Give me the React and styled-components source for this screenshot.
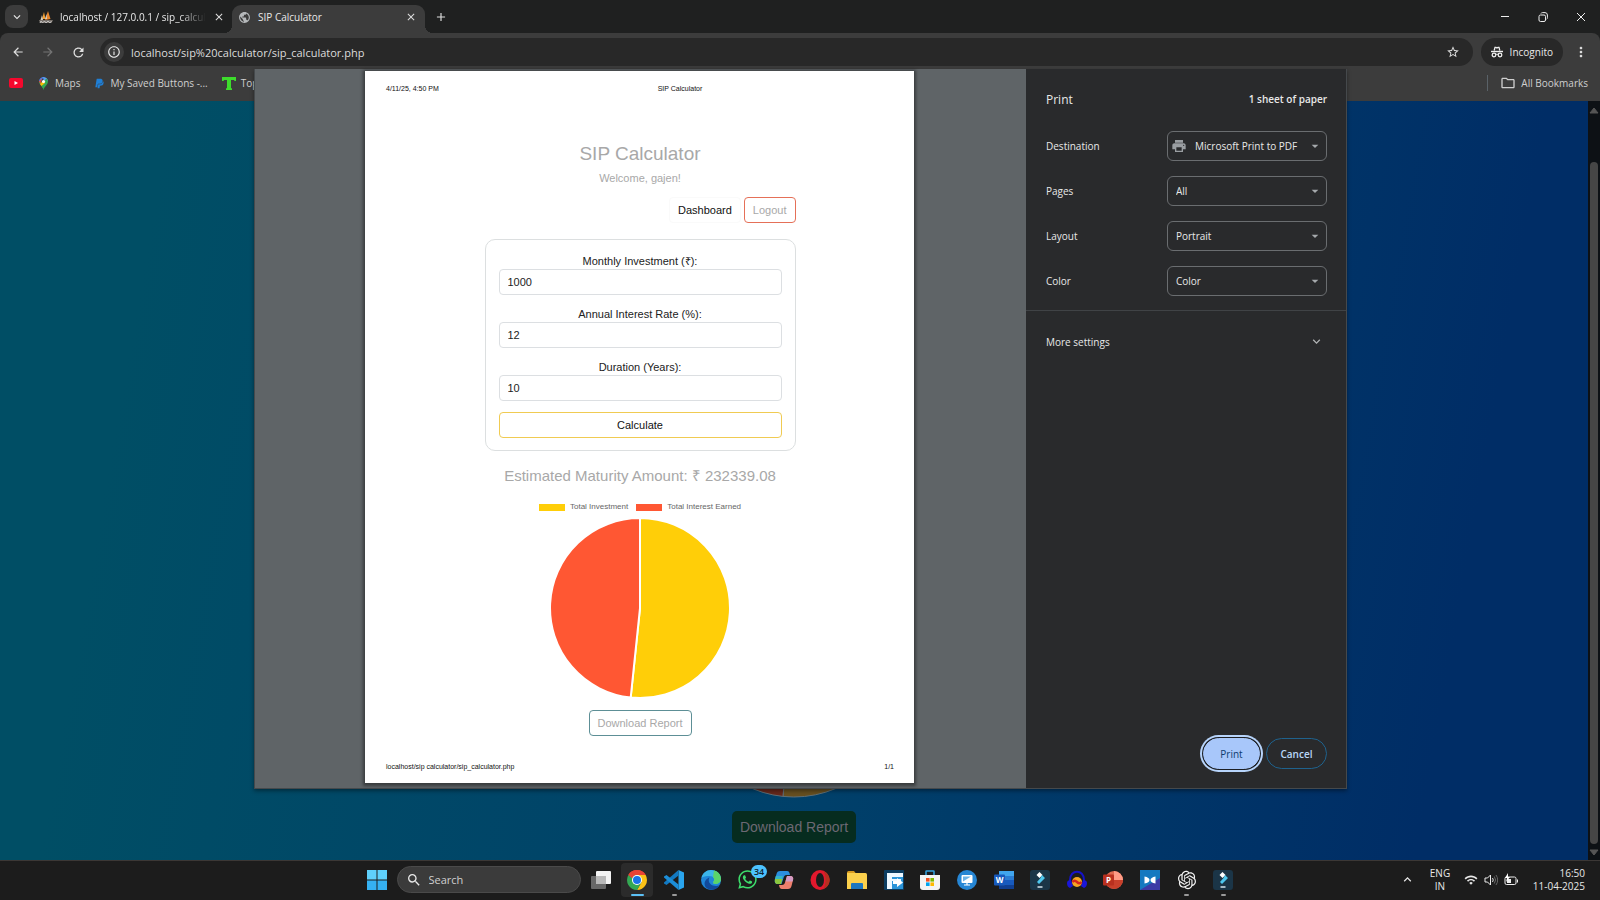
import { useState } from 'react';
import styled, { createGlobalStyle, css } from 'styled-components';
import {
	MdAdd,
	MdArrowBack,
	MdArrowDropDown,
	MdArrowForward,
	MdClose,
	MdExpandLess,
	MdExpandMore,
	MdInfoOutline,
	MdMoreVert,
	MdOutlineFolder,
	MdPrint,
	MdPublic,
	MdRefresh,
	MdSearch,
	MdStarBorder,
	MdWifi,
} from 'react-icons/md';
import { FaPaypal, FaWhatsapp } from 'react-icons/fa';
import { RiOpenaiFill } from 'react-icons/ri';

const GlobalStyle = createGlobalStyle`
	* {
		box-sizing: border-box;
	}
	body {
		margin: 0;
		font-family: 'Open Sans', 'Noto Sans', sans-serif;
		font-size: 10px;
		color: #e8e8e8;
		background: #1c1c1c;
	}
	button, input, select {
		font: inherit;
		color: inherit;
		margin: 0;
	}
	button {
		padding: 0;
		border: 0;
		background: none;
	}
	svg {
		display: block;
		flex: none;
	}
	p, h1, h2 {
		margin: 0;
		font-weight: 400;
	}
`;

const Desktop = styled.div`
	position: relative;
	display: flex;
	flex-direction: column;
	min-height: 100vh;
	overflow: hidden;
`;

/* ---------- browser frame ---------- */

const TabStrip = styled.header`
	display: flex;
	align-items: center;
	height: 33px;
	padding-left: 5px;
	background: #1f2020;
`;

const TabSearch = styled.button`
	display: grid;
	place-items: center;
	width: 23px;
	height: 23px;
	border-radius: 8px;
	background: #3c3c3c;
`;

const Tab = styled.div`
	position: relative;
	display: flex;
	align-items: center;
	gap: 7px;
	width: ${(props) => (props.$active ? '193px' : '200px')};
	height: 28px;
	align-self: flex-end;
	padding: 0 7px 4px ${(props) => (props.$active ? '6px' : '11px')};
	border-radius: 9px 9px 0 0;
	${(props) =>
		props.$active &&
		css`
			background: #3c3c3c;
			margin-left: 4px;
			&::before,
			&::after {
				content: '';
				position: absolute;
				bottom: 0;
				width: 8px;
				height: 8px;
			}
			&::before {
				left: -8px;
				background: radial-gradient(circle at 0 0, transparent 8px, #3c3c3c 8px);
			}
			&::after {
				right: -8px;
				background: radial-gradient(circle at 100% 0, transparent 8px, #3c3c3c 8px);
			}
		`}
`;

const TabTitle = styled.span`
	flex: 1;
	white-space: nowrap;
	line-height: 16px;
	${(props) =>
		props.$fade &&
		css`
			mask-image: linear-gradient(90deg, #000 82%, transparent);
		`}
`;

const IconButton = styled.button`
	display: grid;
	place-items: center;
	width: ${(props) => props.$size || 14}px;
	height: ${(props) => props.$size || 14}px;
	color: ${(props) => props.$color || '#dedede'};
`;

const NewTab = styled(IconButton)`
	margin-left: 9px;
`;

const WindowControls = styled.div`
	display: flex;
	gap: 14px;
	margin-left: auto;
	padding-right: 7px;
`;

const Toolbar = styled.nav`
	display: flex;
	align-items: center;
	height: 36px;
	padding: 2px 9px 0 6px;
	background: #3c3c3c;
	border-radius: 8px 8px 0 0;
`;

const ToolbarBack = styled.div`
	background: #1f2020;
`;

const NavButtons = styled.div`
	display: flex;
	gap: 6px;
	width: 94px;
`;

const Omnibox = styled.div`
	display: flex;
	align-items: center;
	flex: 1;
	height: 28px;
	padding: 0 10px 0 4px;
	border-radius: 14px;
	background: #282828;
`;

const SiteInfo = styled.button`
	display: grid;
	place-items: center;
	width: 20px;
	height: 20px;
	border-radius: 10px;
	background: #3c3c3c;
`;

const Url = styled.input`
	flex: 1;
	margin-left: 7px;
	padding: 0;
	border: 0;
	outline: 0;
	background: none;
	font-size: 11px;
	color: #dcdcdc;
`;

const Incognito = styled.button`
	display: flex;
	align-items: center;
	gap: 7px;
	height: 28px;
	margin: 0 8px;
	padding: 0 10px;
	border-radius: 14px;
	background: #282828;
`;

const BookmarkBar = styled.nav`
	display: flex;
	align-items: center;
	height: 32px;
	padding: 0 12px 4px 9px;
	background: #3c3c3c;
`;

const Bookmark = styled.a`
	display: flex;
	align-items: center;
	gap: 5px;
	margin-right: 14px;
	color: #cfcfcf;
	text-decoration: none;
	white-space: nowrap;
`;

const AllBookmarks = styled(Bookmark)`
	margin: 0 0 0 auto;
	padding-left: 12px;
	border-left: 1px solid #5a6268;
`;

/* ---------- web page behind the dialog ---------- */

const Viewport = styled.main`
	display: flex;
	flex: 1;
	min-height: 0;
	overflow: hidden;
`;

const SipPage = styled.section`
	display: flex;
	flex: 1;
	flex-direction: column;
	justify-content: flex-end;
	align-items: center;
	gap: 13px;
	padding-bottom: 17px;
	background: linear-gradient(100deg, #004e65 10%, #00406a 55%, #002d66 90%);
`;

const DimButton = styled.button`
	width: 124px;
	height: 32px;
	border-radius: 5px;
	background: #062c1f;
	color: #6c6873;
	font-family: 'Liberation Sans', Arial, sans-serif;
	font-size: 14px;
`;

const Scrollbar = styled.div`
	display: flex;
	flex-direction: column;
	align-items: center;
	width: 12px;
	background: #0d1115;
	color: #555;
`;

const ScrollThumb = styled.div`
	flex: 1;
	width: 8px;
	margin-top: 45px;
	border-radius: 4px;
	background: #464646;
`;

/* ---------- print dialog ---------- */

const PrintDialog = styled.section`
	position: absolute;
	inset: 69px 253px 111px 254px;
	display: flex;
	border: 1px solid #45494c;
	border-top: 0;
	box-shadow: 0 2px 4px rgba(0, 0, 0, 0.4);
`;

const Preview = styled.div`
	display: flex;
	flex: 1;
	justify-content: center;
	padding: 2px 2px 5px 0;
	background: #5f6467;
`;

const Sheet = styled.article`
	display: flex;
	flex-direction: column;
	align-items: center;
	height: 100%;
	aspect-ratio: 549 / 712;
	padding: 13px 20px 11px 21px;
	background: #fff;
	box-shadow: 0 1px 3px 2px rgba(0, 0, 0, 0.4);
	color: #222;
	font-family: 'Liberation Sans', Arial, sans-serif;
	font-size: 11px;
`;

const SheetLine = styled.div`
	display: grid;
	grid-template-columns: 1fr auto 1fr;
	width: 100%;
	padding-left: ${(props) => (props.$header ? '80px' : '0')};
	font-size: 7px;
	line-height: 10px;
	color: #111;

	& > :first-child {
		margin-left: ${(props) => (props.$header ? '-80px' : '0')};
	}
	& > :last-child {
		text-align: right;
	}
`;

const Report = styled.div`
	display: flex;
	flex: 1;
	flex-direction: column;
	align-items: center;
	width: 311px;
	padding-top: 47px;
`;

const Title = styled.h1`
	font-size: 19px;
	line-height: 26px;
	color: #a8a8a8;
`;

const Welcome = styled.p`
	margin-top: 3px;
	line-height: 16px;
	color: #a8a8a8;
`;

const Links = styled.div`
	display: flex;
	align-self: flex-end;
	gap: 3px;
	margin: 11px 0 16px;
`;

const OutlineButton = styled.button`
	height: 26px;
	padding: 0 8px;
	border: 1px solid ${(props) => props.$border};
	border-radius: 4px;
	color: ${(props) => props.$color || '#a8a8a8'};
	text-align: center;
`;

const Card = styled.form`
	display: flex;
	flex-direction: column;
	width: 100%;
	padding: 13px 13px 12px;
	border: 1px solid #dcdfe0;
	border-radius: 10px;
`;

const Field = styled.label`
	display: block;
	margin-bottom: 11px;
	line-height: 16px;
	text-align: center;
`;

const FieldInput = styled.input`
	display: block;
	width: 100%;
	height: 26px;
	padding: 0 8px;
	border: 1px solid #dcdfe2;
	border-radius: 4px;
	outline: 0;
	background: #fff;
`;

const Maturity = styled.h2`
	margin: 14px 0 15px;
	font-size: 15px;
	line-height: 22px;
	color: #a8a8a8;
	white-space: nowrap;
`;

const Legend = styled.div`
	display: flex;
	gap: 8px;
	margin-bottom: 6px;
	font-size: 8px;
	line-height: 10px;
	color: #666;
`;

const LegendItem = styled.span`
	display: flex;
	align-items: center;
	gap: 5px;

	&::before {
		content: '';
		width: 26px;
		height: 7px;
		background: ${(props) => props.$color};
	}
`;

const DownloadButton = styled(OutlineButton)`
	margin-top: 12px;
`;

const Settings = styled.aside`
	display: flex;
	flex-direction: column;
	width: 320px;
	background: #292a2c;
`;

const SettingsHead = styled.div`
	display: flex;
	align-items: center;
	justify-content: space-between;
	height: 62px;
	padding: 0 19px 2px 20px;
`;

const DialogTitle = styled.h2`
	font-size: 12px;
`;

const SheetCount = styled.span`
	font-weight: 600;
`;

const SettingRow = styled.div`
	display: flex;
	align-items: center;
	justify-content: space-between;
	height: 30px;
	margin-bottom: 15px;
	padding: 0 19px 0 20px;
`;

const SelectBox = styled.div`
	position: relative;
	width: 160px;
	height: 30px;
`;

const SettingSelect = styled.select`
	width: 100%;
	height: 100%;
	padding: 0 20px 0 ${(props) => (props.$icon ? '27px' : '8px')};
	border: 1px solid #6a6d70;
	border-radius: 6px;
	outline: 0;
	background: transparent;
	appearance: none;
`;

const SelectIcon = styled.span`
	position: absolute;
	top: 7px;
	left: 4px;
	color: #9a9ea2;
	pointer-events: none;
`;

const SelectCaret = styled.span`
	position: absolute;
	top: 7px;
	right: 4px;
	color: #a5a9ac;
	pointer-events: none;
`;

const MoreSettings = styled.button`
	display: flex;
	align-items: center;
	justify-content: space-between;
	margin-top: -1px;
	padding: 23px 22px 0 20px;
	border-top: 1px solid #404346;
`;

const DialogActions = styled.div`
	display: flex;
	justify-content: flex-end;
	gap: 6px;
	margin-top: auto;
	padding: 0 19px 19px;
`;

const PillButton = styled.button`
	width: ${(props) => (props.$primary ? '57px' : '61px')};
	height: 31px;
	border-radius: 16px;
	border: 1px solid ${(props) => (props.$primary ? '#a8c7fa' : '#1f628d')};
	background: ${(props) => (props.$primary ? '#a8c7fa' : 'transparent')};
	color: ${(props) => (props.$primary ? '#0c3c6e' : '#b9d7f8')};
	font-weight: ${(props) => (props.$primary ? 400 : 600)};
	${(props) =>
		props.$primary &&
		css`
			box-shadow: 0 0 0 1px #1c1f24, 0 0 0 3px #b7d4fb;
		`}
`;

/* ---------- taskbar ---------- */

const Taskbar = styled.footer`
	display: grid;
	grid-template-columns: 1fr auto 1fr;
	align-items: center;
	height: 40px;
	padding: 0 0 2px 4px;
	border-top: 1px solid #3b3735;
	background: #1c1c1c;
`;

const TaskGroup = styled.div`
	display: flex;
	align-items: center;
	grid-column: 2;
`;

const StartButton = styled(IconButton)`
	margin-right: 6px;
`;

const SearchPill = styled.label`
	display: flex;
	align-items: center;
	gap: 7px;
	width: 184px;
	height: 27px;
	margin-right: 2px;
	padding-left: 8px;
	border: 1px solid #4a4a4a;
	border-radius: 14px;
	background: #3b3b3b;

	input {
		width: 130px;
		padding: 0;
		border: 0;
		outline: 0;
		background: none;
		font-size: 11px;
	}
	input::placeholder {
		color: #cfcfcf;
		opacity: 1;
	}
`;

const Apps = styled.div`
	display: grid;
	grid-template-columns: repeat(18, 1fr);
	justify-items: center;
	width: 659px;
`;

const AppButton = styled.button`
	position: relative;
	display: grid;
	place-items: center;
	width: 32px;
	height: 34px;
	border-radius: 4px;
	background: ${(props) => (props.$active ? '#2b2b2b' : 'transparent')};

	&::after {
		content: '';
		position: absolute;
		bottom: 1px;
		width: ${(props) => (props.$active ? '13px' : '5px')};
		height: 2px;
		border-radius: 1px;
		background: ${(props) =>
			props.$active ? '#5cc0f5' : props.$running ? '#9a9a9a' : 'transparent'};
	}
`;

const Badge = styled.span`
	position: absolute;
	top: 2px;
	right: -4px;
	padding: 0 3px;
	border-radius: 7px;
	background: #4cc2ff;
	color: #10242e;
	font-size: 9px;
	font-weight: 600;
	line-height: 13px;
`;

const Tray = styled.div`
	display: flex;
	align-items: center;
	justify-content: flex-end;
	padding-right: 15px;
	line-height: 13px;
`;

const Language = styled.div`
	width: 20px;
	margin: 0 14px 0 15px;
	text-align: center;
`;

const TrayIcons = styled.div`
	display: flex;
	align-items: center;
	gap: 6px;
	margin-right: 15px;
`;

const Clock = styled.time`
	text-align: right;
`;

/* ---------- drawings ---------- */

const Icon = ({ size = 20, box = 20, children }) => (
	<svg width={size} height={size} viewBox={`0 0 ${box} ${box}`} fill="none">
		{children}
	</svg>
);

const PhpMyAdminIcon = () => (
	<Icon size={14} box={14}>
		<path d="M3 9 5 2l1.500 7z" fill="#f6a032" />
		<path d="M6 10 9 1l2.500 8z" fill="#e9862c" />
		<path d="M1.500 10 3 5l1 5z" fill="#d9d0c0" />
		<path d="M6 9 7.500 4 8 9z" fill="#d9d0c0" />
		<path d="M0 10h14l-1.500 3H1z" fill="#77706a" />
		<path d="m1 13 1-2 1.500 2 2-2 1.500 2 2-2 2 2 1.500-2" stroke="#d5d5d5" strokeWidth="0.8" />
	</Icon>
);

const RestoreIcon = () => (
	<Icon size={10} box={10}>
		<rect x="1" y="3" width="6.500" height="6.500" rx="1.500" stroke="#eee" />
		<path d="M3 1.500C3.300.8 3.800.6 4.500.6H7A2.500 2.500 0 0 1 9.400 3v2.700c0 .7-.2 1.200-.8 1.500" stroke="#eee" />
	</Icon>
);

const IncognitoIcon = () => (
	<Icon size={12} box={12}>
		<path d="M3.200 4.500 4 1.400h1L6 2l1-.6h1l.8 3.100" stroke="#eee" strokeWidth="1.300" />
		<path d="M0 5.500h12" stroke="#eee" strokeWidth="1.400" />
		<circle cx="3" cy="9" r="1.800" stroke="#eee" strokeWidth="1.300" />
		<circle cx="9" cy="9" r="1.800" stroke="#eee" strokeWidth="1.300" />
		<path d="M4.700 8.500q1.300-.8 2.600 0" stroke="#eee" />
	</Icon>
);

const YoutubeIcon = () => (
	<Icon size={14} box={14}>
		<rect y="2" width="14" height="10" rx="2" fill="#f5082d" />
		<path d="m5.500 5 3.500 2-3.500 2z" fill="#fff" />
	</Icon>
);

const MapsIcon = () => (
	<Icon size={13} box={13}>
		<path d="M6.500 13C6 9.500 2 8 2 4.500L6.500 6z" fill="#34a853" />
		<path d="M2 5C1.800 2.500 3.800 0 6.500 0L4 4.500z" fill="#4285f4" />
		<path d="M6 0c2.500-.2 5 1.500 5 4.500L7 6z" fill="#5a9df6" />
		<path d="M2 4.500 5 1 3.500 7z" fill="#ea4335" />
		<path d="M11 4.500C11 8 7 9.500 6.500 13 6.200 10.500 4.500 9 3.500 7.500L9.500 1.500z" fill="#34a853" />
		<path d="M3 7 6.500 3l1.500 3-3.500 3z" fill="#fbbc04" />
		<circle cx="6.500" cy="4.500" r="1.600" fill="#fff" />
	</Icon>
);

const GreenTIcon = () => (
	<Icon size={14} box={14}>
		<path d="M0 1h14v4h-1.500l-.5-1H9v8l1 .5V14H4v-1.500L5 12V4H2l-.5 1H0z" fill="#3ddc2c" />
	</Icon>
);

const ScrollArrow = ({ down }) => (
	<Icon size={12} box={12}>
		<path d={down ? 'M2 4h8l-4 5z' : 'M2 10h8L6 5z'} fill="#555" stroke="#555" strokeLinejoin="round" />
	</Icon>
);

const ScrollEnd = styled.div`
	display: grid;
	place-items: center;
	height: 16px;
`;

const WindowsIcon = () => (
	<Icon>
		<path d="M0 0h9.500v9.500H0zM10.500 0H20v9.500h-9.500z" fill="#5fd0fb" />
		<path d="M0 10.500h9.500V20H0zM10.500 10.500H20V20h-9.500z" fill="#35b1f2" />
	</Icon>
);

const TaskViewIcon = () => (
	<Icon>
		<rect x="5" y="1" width="15" height="13" rx="1" fill="#f3f3f3" />
		<rect y="6" width="15" height="13" rx="1" fill="#686868" />
		<path d="M5 6h10v8H5z" fill="#b9b9b9" />
	</Icon>
);

const ChromeIcon = () => (
	<Icon>
		<path d="M10 10 1.340 5A10 10 0 0 1 18.660 5z" fill="#ea4335" />
		<path d="M10 10V5h8.660A10 10 0 0 1 10 20l4.500-8z" fill="#fbc116" />
		<path d="M1.340 5A10 10 0 0 0 10 20l4.330-7.500-4.330 2.500z" fill="#34a853" />
		<path d="m1.340 5 4.330 7.500L10 10V5z" fill="#34a853" />
		<path d="M1.340 5A10 10 0 0 1 18.660 5H10a5 5 0 0 0-4.700 3.500z" fill="#ea4335" />
		<circle cx="10" cy="10" r="5" fill="#fff" />
		<circle cx="10" cy="10" r="4" fill="#1a73e8" />
	</Icon>
);

const VsCodeIcon = () => (
	<Icon>
		<path d="M14.500 0 20 2.500v15L14.500 20z" fill="#2aa5ee" />
		<path d="M14.500 0v5.500L2.500 15 0 13.500v-1z" fill="#1279c2" />
		<path d="M14.500 20v-5.500L2.500 5 0 6.500v1z" fill="#1c8ed8" />
	</Icon>
);

const EdgeIcon = () => (
	<Icon>
		<circle cx="10" cy="10" r="10" fill="#1f86d8" />
		<path d="M.5 8C1.500 3 5.500 0 10 0c6 0 10 4 10 9 0 3.500-3 5-5.500 5-2.500 0-3-1.500-2-2.500 1.500-2 .5-5.500-4-5.500C5 6 2 6.500.5 8z" fill="#3bb5ea" />
		<path d="M13 .5c4.500 1 7 4.500 7 8.500 0 3.500-3 5-5.500 5-2.500 0-3-1.500-2-2.500 1.200-1.600.8-3.500-.5-4.500z" fill="#5ad46a" />
		<path d="M8.500 7.500C6 12 10 17.500 18.500 15.500 15 21 8 21 4.500 17 2 13 5 8.500 8.500 7.500z" fill="#114a9b" />
	</Icon>
);

const CopilotIcon = () => (
	<Icon>
		<path d="M6 1h7c2 0 2.500 1.500 3 4h-3.500c-2 0-2.500 1.500-3 3l-2 6H4c-3 0-3.700-2-3-5l1.500-5C3 2 4 1 6 1z" fill="#2a8fe0" />
		<path d="M1.800 6h7l-.7 3H1z" fill="#35b5c6" />
		<path d="M1 9h7.500L7 14H4c-3 0-3.500-2-3-5z" fill="#8cc63f" />
		<path d="M14 19H8c-2 0-2.500-1.500-3-4h3c2 0 2.500-1 3-2.500L13 6h3c3 0 3.700 2 3 4l-1.500 6c-.5 2-1.500 3-3.500 3z" fill="#ee7f6d" />
		<path d="M13 6h3c3 0 3.500 2 3 4l-.5 1.500h-7z" fill="#d49bc4" />
	</Icon>
);

const OperaIcon = () => (
	<Icon>
		<ellipse cx="10" cy="10" rx="9.500" ry="10" fill="#e3182d" />
		<path d="M13 1c9 3 9 15 0 18 3-3 4-15 0-18z" fill="#b5301f" />
		<ellipse cx="10" cy="10" rx="4" ry="7" fill="#1c1c1c" />
	</Icon>
);

const ExplorerIcon = () => (
	<Icon>
		<path d="M0 2.500Q0 1 1.500 1H7l2 2.500H0z" fill="#d99c22" />
		<path d="M0 3h18.500Q20 3 20 4.500V19H0z" fill="#fbd04c" />
		<path d="M4 19v-5q0-1 1-1h10q1 0 1 1v5z" fill="#1d77c0" />
	</Icon>
);

const TransferIcon = () => (
	<Icon>
		<rect width="20" height="20" rx="1" fill="#0c3d61" />
		<path d="M3 3h16v16H3z" fill="#2b94d8" />
		<path d="M3 3h16v4H8v2h9v2H8v8H3z" fill="#eef8ff" />
		<path d="M9 11h4V8l6 4.500-6 4.500v-3H9z" fill="#fff" />
	</Icon>
);

const StoreIcon = () => (
	<Icon>
		<path d="M6 5V1.500Q6 1 6.500 1h7q.5 0 .5.500V5" stroke="#34a3df" strokeWidth="1.500" />
		<path d="M0 5h20v12q0 3-3 3H3q-3 0-3-3z" fill="#f4f4f4" />
		<path d="M6 8h3.600v3.600H6z" fill="#f25022" />
		<path d="M10.400 8H14v3.600h-3.600z" fill="#7fba00" />
		<path d="M6 12.400h3.600V16H6z" fill="#00a4ef" />
		<path d="M10.400 12.400H14V16h-3.600z" fill="#ffb900" />
	</Icon>
);

const RemoteIcon = () => (
	<Icon>
		<circle cx="10" cy="10" r="10" fill="#2686d4" />
		<rect x="4.500" y="5" width="11" height="8" rx="1" fill="#fff" />
		<path d="M6 6.500h8L6 11.500z" fill="#6fb5e8" />
		<path d="M7 15h6M10 13v2" stroke="#fff" strokeWidth="1.200" />
	</Icon>
);

const WordIcon = () => (
	<Icon>
		<path d="M5 1h15v5H5z" fill="#41a5ee" />
		<path d="M5 6h15v4H5z" fill="#2b7cd3" />
		<path d="M5 10h15v5H5z" fill="#185abd" />
		<path d="M5 15h15v4H5z" fill="#103f91" />
		<rect y="4.500" width="11" height="11" rx="1" fill="#185abd" />
		<text x="5.500" y="13" textAnchor="middle" fontSize="8" fontWeight="700" fill="#fff">W</text>
	</Icon>
);

const FilmoraIcon = () => (
	<Icon>
		<rect width="20" height="20" rx="3" fill="#1b3547" />
		<path d="m9.500 2 3 3-3 3-3-3z" fill="#fff" />
		<path d="m12 5 3 3-6 6-2-2 3.500-4z" fill="#4ec7ee" />
		<path d="M7.500 17h5" stroke="#d7e4ec" strokeWidth="1.500" />
	</Icon>
);

const AudacityIcon = () => (
	<Icon>
		<path d="M3 15V10C3 -1 17 -1 17 10v5" stroke="#1512c9" strokeWidth="2" />
		<path d="M0 13q0-3 4-3l2 6-3 2q-3-1-3-5zM20 13q0-3-4-3l-2 6 3 2q3-1 3-5z" fill="#1a16d8" />
		<circle cx="10" cy="12" r="5" fill="#f5a623" />
		<path d="M5.500 12q2-2.500 4.500 0t4.500 0" stroke="#d5271d" strokeWidth="2.500" />
	</Icon>
);

const PowerPointIcon = () => (
	<Icon>
		<circle cx="11" cy="10" r="9" fill="#e06a50" />
		<path d="M11 1a9 9 0 0 1 9 9h-9z" fill="#ff9b85" />
		<path d="M2 10h18a9 9 0 0 1-18 0z" fill="#c8402b" />
		<rect y="4.500" width="11" height="11" rx="1" fill="#b9301f" />
		<text x="5.500" y="13" textAnchor="middle" fontSize="8" fontWeight="700" fill="#fff">P</text>
	</Icon>
);

const BowTieIcon = () => (
	<Icon>
		<path d="M0 0h20v20H0z" fill="#1479c0" />
		<path d="M0 20 20 8v12z" fill="#3c3aa6" />
		<path d="M4.500 6.500q5 1 5 3.500t-5 3.500zM15.500 6.500q-5 1-5 3.500t5 3.500z" fill="#fff" />
	</Icon>
);

const VolumeIcon = () => (
	<Icon size={14} box={14}>
		<path d="M1 5h2.500L6.500 2v10l-3-3H1z" stroke="#eee" />
		<path d="M8.500 5q1.500 2 0 4" stroke="#ddd" />
		<path d="M10.300 3.500q2.600 3.500 0 7M12 2q3.400 5 0 10" stroke="#666" />
	</Icon>
);

const BatteryIcon = () => (
	<Icon size={14} box={14}>
		<rect x="1" y="4" width="11" height="7.500" rx="1.500" stroke="#eee" />
		<path d="M3 6h4v4H3z" fill="#eee" />
		<path d="M13.500 6.500v3" stroke="#eee" />
		<path d="M4 0 1 5h2l-1 4 4-5H4z" fill="#fff" />
	</Icon>
);

const slicePath = (from, to, r) => {
	const point = (t) => `${r * Math.sin(t * 2 * Math.PI)} ${-r * Math.cos(t * 2 * Math.PI)}`;
	return `M0 0L${point(from)}A${r} ${r} 0 ${to - from > 0.5 ? 1 : 0} 1 ${point(to)}Z`;
};

const MATURITY = 232339.08;
const INVESTED = 1000 * 12 * 10;

const PieChart = () => {
	const share = INVESTED / MATURITY;
	return (
		<svg width="180" height="180" viewBox="-90 -90 180 180" role="img" aria-label="Investment split">
			<g stroke="#fff" strokeWidth="2" strokeLinejoin="round">
				<path d={slicePath(0, share, 90)} fill="#ffce08" />
				<path d={slicePath(share, 1, 90)} fill="#ff5733" />
			</g>
		</svg>
	);
};

// only the bottom edge of the page's own chart shows under the dialog
const DimPie = () => (
	<svg width="216" height="20" viewBox="-108 88 216 20">
		<g stroke="#5d6f78" strokeWidth="1">
			<path d={slicePath(0, INVESTED / MATURITY, 107)} fill="#664f20" />
			<path d={slicePath(INVESTED / MATURITY, 1, 107)} fill="#66281c" />
		</g>
	</svg>
);

/* ---------- data ---------- */

const FIELDS = [
	{ id: 'monthly', label: 'Monthly Investment (₹):', value: '1000' },
	{ id: 'rate', label: 'Annual Interest Rate (%):', value: '12' },
	{ id: 'years', label: 'Duration (Years):', value: '10' },
];

const SETTINGS = [
	{
		id: 'destination',
		label: 'Destination',
		icon: true,
		options: ['Microsoft Print to PDF', 'Save as PDF'],
	},
	{ id: 'pages', label: 'Pages', options: ['All', 'Odd pages only', 'Custom'] },
	{ id: 'layout', label: 'Layout', options: ['Portrait', 'Landscape'] },
	{ id: 'color', label: 'Color', options: ['Color', 'Black and white'] },
];

const APPS = [
	{ name: 'Task view', icon: <TaskViewIcon /> },
	{ name: 'Chrome', icon: <ChromeIcon />, active: true },
	{ name: 'Visual Studio Code', icon: <VsCodeIcon />, running: true },
	{ name: 'Edge', icon: <EdgeIcon /> },
	{ name: 'WhatsApp', icon: <FaWhatsapp size={21} color="#3ddc6b" />, badge: 34 },
	{ name: 'Copilot', icon: <CopilotIcon /> },
	{ name: 'Opera', icon: <OperaIcon /> },
	{ name: 'File Explorer', icon: <ExplorerIcon /> },
	{ name: 'Transfer', icon: <TransferIcon /> },
	{ name: 'Microsoft Store', icon: <StoreIcon /> },
	{ name: 'Remote', icon: <RemoteIcon /> },
	{ name: 'Word', icon: <WordIcon /> },
	{ name: 'Filmora', icon: <FilmoraIcon /> },
	{ name: 'Audacity', icon: <AudacityIcon /> },
	{ name: 'PowerPoint', icon: <PowerPointIcon /> },
	{ name: 'Bow tie', icon: <BowTieIcon /> },
	{ name: 'ChatGPT', icon: <RiOpenaiFill size={22} color="#f2f2f2" />, running: true },
	{ name: 'Filmora', icon: <FilmoraIcon />, running: true },
];

/* ---------- sections ---------- */

const BrowserFrame = () => (
	<>
		<TabStrip>
			<TabSearch aria-label="Search tabs">
				<MdExpandMore size={14} />
			</TabSearch>
			<Tab>
				<PhpMyAdminIcon />
				<TabTitle $fade>localhost / 127.0.0.1 / sip_calcul</TabTitle>
				<IconButton aria-label="Close tab">
					<MdClose size={12} />
				</IconButton>
			</Tab>
			<Tab $active>
				<MdPublic size={13} color="#b5b8ba" />
				<TabTitle>SIP Calculator</TabTitle>
				<IconButton aria-label="Close tab">
					<MdClose size={12} />
				</IconButton>
			</Tab>
			<NewTab aria-label="New tab">
				<MdAdd size={14} />
			</NewTab>
			<WindowControls>
				<IconButton aria-label="Minimize" $size={24}>
					<Icon size={10} box={10}>
						<path d="M1 4.500h8" stroke="#eee" />
					</Icon>
				</IconButton>
				<IconButton aria-label="Restore" $size={24}>
					<RestoreIcon />
				</IconButton>
				<IconButton aria-label="Close" $size={24}>
					<Icon size={10} box={10}>
						<path d="m1 1 8 8M9 1 1 9" stroke="#eee" />
					</Icon>
				</IconButton>
			</WindowControls>
		</TabStrip>
		<ToolbarBack>
			<Toolbar>
				<NavButtons>
					<IconButton aria-label="Back" $size={24}>
						<MdArrowBack size={14} />
					</IconButton>
					<IconButton aria-label="Forward" $size={24} $color="#757575">
						<MdArrowForward size={14} />
					</IconButton>
					<IconButton aria-label="Reload" $size={24}>
						<MdRefresh size={15} />
					</IconButton>
				</NavButtons>
				<Omnibox>
					<SiteInfo aria-label="Site information">
						<MdInfoOutline size={14} />
					</SiteInfo>
					<Url
						aria-label="Address"
						defaultValue="localhost/sip%20calculator/sip_calculator.php"
					/>
					<IconButton aria-label="Bookmark this page" $size={20}>
						<MdStarBorder size={14} />
					</IconButton>
				</Omnibox>
				<Incognito>
					<IncognitoIcon />
					Incognito
				</Incognito>
				<IconButton aria-label="Menu" $size={20}>
					<MdMoreVert size={16} />
				</IconButton>
			</Toolbar>
		</ToolbarBack>
		<BookmarkBar>
			<Bookmark href="#youtube" aria-label="YouTube">
				<YoutubeIcon />
			</Bookmark>
			<Bookmark href="#maps">
				<MapsIcon />
				Maps
			</Bookmark>
			<Bookmark href="#buttons">
				<FaPaypal size={11} color="#1f7fd6" />
				My Saved Buttons -...
			</Bookmark>
			<Bookmark href="#top">
				<GreenTIcon />
				Top
			</Bookmark>
			<AllBookmarks href="#all">
				<MdOutlineFolder size={16} />
				All Bookmarks
			</AllBookmarks>
		</BookmarkBar>
	</>
);

const PrintedReport = () => (
	<Sheet>
		<SheetLine $header>
			<span>4/11/25, 4:50 PM</span>
			<span>SIP Calculator</span>
			<span />
		</SheetLine>
		<Report>
			<Title>SIP Calculator</Title>
			<Welcome>Welcome, gajen!</Welcome>
			<Links>
				<OutlineButton $border="#fafafa" $color="#111">
					Dashboard
				</OutlineButton>
				<OutlineButton $border="#e57058">Logout</OutlineButton>
			</Links>
			<Card onSubmit={(e) => e.preventDefault()}>
				{FIELDS.map((field) => (
					<Field key={field.id}>
						{field.label}
						<FieldInput name={field.id} defaultValue={field.value} />
					</Field>
				))}
				<OutlineButton $border="#f0cb52" $color="#111">
					Calculate
				</OutlineButton>
			</Card>
			<Maturity>Estimated Maturity Amount: ₹ {MATURITY}</Maturity>
			<Legend>
				<LegendItem $color="#ffce08">Total Investment</LegendItem>
				<LegendItem $color="#ff5733">Total Interest Earned</LegendItem>
			</Legend>
			<PieChart />
			<DownloadButton $border="#5d8f96">Download Report</DownloadButton>
		</Report>
		<SheetLine>
			<span>localhost/sip calculator/sip_calculator.php</span>
			<span />
			<span>1/1</span>
		</SheetLine>
	</Sheet>
);

const PrintSettings = () => {
	const [values, setValues] = useState({});
	return (
		<Settings>
			<SettingsHead>
				<DialogTitle>Print</DialogTitle>
				<SheetCount>1 sheet of paper</SheetCount>
			</SettingsHead>
			{SETTINGS.map(({ id, label, icon, options }) => (
				<SettingRow key={id}>
					<label htmlFor={id}>{label}</label>
					<SelectBox>
						{icon && (
							<SelectIcon>
								<MdPrint size={16} />
							</SelectIcon>
						)}
						<SettingSelect
							id={id}
							$icon={icon}
							value={values[id] || options[0]}
							onChange={(e) => setValues({ ...values, [id]: e.target.value })}>
							{options.map((option) => (
								<option key={option}>{option}</option>
							))}
						</SettingSelect>
						<SelectCaret>
							<MdArrowDropDown size={16} />
						</SelectCaret>
					</SelectBox>
				</SettingRow>
			))}
			<MoreSettings>
				More settings
				<MdExpandMore size={15} color="#b0b3b5" />
			</MoreSettings>
			<DialogActions>
				<PillButton $primary>Print</PillButton>
				<PillButton>Cancel</PillButton>
			</DialogActions>
		</Settings>
	);
};

const WindowsTaskbar = () => (
	<Taskbar>
		<TaskGroup>
			<StartButton aria-label="Start" $size={28}>
				<WindowsIcon />
			</StartButton>
			<SearchPill>
				<MdSearch size={16} />
				<input placeholder="Search" aria-label="Search" />
			</SearchPill>
			<Apps>
				{APPS.map((app, i) => (
					<AppButton
						key={i}
						aria-label={app.name}
						$active={app.active}
						$running={app.running}>
						{app.icon}
						{app.badge && <Badge>{app.badge}</Badge>}
					</AppButton>
				))}
			</Apps>
		</TaskGroup>
		<Tray>
			<MdExpandLess size={15} />
			<Language>
				ENG
				<br />
				IN
			</Language>
			<TrayIcons>
				<MdWifi size={14} />
				<VolumeIcon />
				<BatteryIcon />
			</TrayIcons>
			<Clock dateTime="2025-04-11T16:50">
				16:50
				<br />
				11-04-2025
			</Clock>
		</Tray>
	</Taskbar>
);

const App = () => {
	return (
		<Desktop>
			<GlobalStyle />
			<BrowserFrame />
			<Viewport>
				<SipPage>
					<DimPie />
					<DimButton>Download Report</DimButton>
				</SipPage>
				<Scrollbar>
					<ScrollEnd>
						<ScrollArrow />
					</ScrollEnd>
					<ScrollThumb />
					<ScrollEnd>
						<ScrollArrow down />
					</ScrollEnd>
				</Scrollbar>
			</Viewport>
			<PrintDialog role="dialog" aria-label="Print">
				<Preview>
					<PrintedReport />
				</Preview>
				<PrintSettings />
			</PrintDialog>
			<WindowsTaskbar />
		</Desktop>
	);
};

export default App;
